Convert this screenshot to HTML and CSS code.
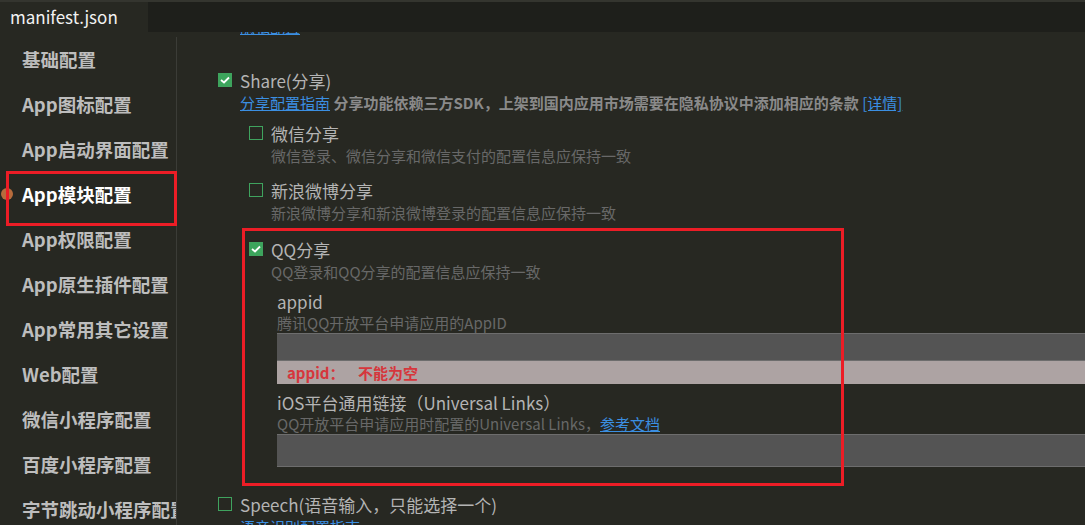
FILE: index.html
```html
<!DOCTYPE html>
<html lang="zh">
<head>
    <meta charset="UTF-8">
    <title>manifest.json</title>
    <link rel="stylesheet" href="styles.css">
</head>
<body>
    <div class="tab-bar">
        <div class="tab">manifest.json</div>
    </div>

    <div class="main">
        <div class="sidebar">
            <div class="nav-item">基础配置</div>
            <div class="nav-item">App图标配置</div>
            <div class="nav-item">App启动界面配置</div>
            <div class="nav-item active">App模块配置</div>
            <div class="nav-item">App权限配置</div>
            <div class="nav-item">App原生插件配置</div>
            <div class="nav-item">App常用其它设置</div>
            <div class="nav-item">Web配置</div>
            <div class="nav-item">微信小程序配置</div>
            <div class="nav-item">百度小程序配置</div>
            <div class="nav-item">字节跳动小程序配置</div>
        </div>

        <div class="content">
            <div class="cut-link"><a href="#">隐私配置指南</a></div>

            <div class="opt opt-share">
                <span class="check on"><svg width="10" height="8" viewBox="0 0 10 8"><path d="M1 4 L4 6.5 L9 1.5" fill="none" stroke="#fff" stroke-width="1.8"/></svg></span>
                <span>Share(分享)</span>
            </div>
            <div class="note"><a href="#">分享配置指南</a> <b>分享功能依赖三方SDK，上架到国内应用市场需要在隐私协议中添加相应的条款</b> <a href="#">[详情]</a></div>

            <div class="sub">
                <div class="opt gap-a">
                    <span class="check"></span>
                    <span>微信分享</span>
                </div>
                <div class="desc">微信登录、微信分享和微信支付的配置信息应保持一致</div>

                <div class="opt gap-b">
                    <span class="check"></span>
                    <span>新浪微博分享</span>
                </div>
                <div class="desc">新浪微博分享和新浪微博登录的配置信息应保持一致</div>

                <div class="opt gap-c">
                    <span class="check on"><svg width="10" height="8" viewBox="0 0 10 8"><path d="M1 4 L4 6.5 L9 1.5" fill="none" stroke="#fff" stroke-width="1.8"/></svg></span>
                    <span>QQ分享</span>
                </div>
                <div class="desc">QQ登录和QQ分享的配置信息应保持一致</div>

                <div class="field">
                    <div class="field-label">appid</div>
                    <div class="field-desc">腾讯QQ开放平台申请应用的AppID</div>
                    <div class="input"></div>
                    <div class="error">appid：&nbsp;&nbsp;&nbsp;&nbsp;不能为空</div>

                    <div class="field-label gap-d">iOS平台通用链接（Universal Links）</div>
                    <div class="field-desc">QQ开放平台申请应用时配置的Universal Links，<a href="#">参考文档</a></div>
                    <div class="input tall"></div>
                </div>
            </div>

            <div class="opt gap-e">
                <span class="check"></span>
                <span>Speech(语音输入，只能选择一个)</span>
            </div>
            <div class="note"><a href="#">语音识别配置指南</a></div>
        </div>
    </div>

    <!-- annotation boxes drawn over the screenshot -->
    <div class="mark mark-nav"></div>
    <div class="mark mark-qq"></div>
</body>
</html>
```

FILE: styles.css
```css
body {
    margin: 0;
    width: 1085px;
    height: 525px;
    overflow: hidden;
    background-color: #272822;
    font-family: "Noto Sans CJK SC", "Noto Sans", sans-serif;
    color: #b4b4b4;
    position: relative;
}
a {
    color: #3b8fe2;
    text-decoration: underline;
}
.tab-bar {
    height: 30px;
    border-top: 2px solid #34352f;
    background-color: #1e1f1b;
    display: flex;
}
.tab {
    width: 138px;
    padding-left: 10px;
    background-color: #272822;
    color: #f2f2f2;
    font-size: 17px;
    line-height: 30px;
}
.main {
    display: flex;
    height: 493px;
}
.sidebar {
    width: 176px;
    flex-shrink: 0;
    margin-top: 5px;
    border-right: 1px solid #3b3c37;
    overflow: hidden;
    white-space: nowrap;
}
.nav-item {
    height: 45px;
    line-height: 45px;
    padding-left: 22px;
    font-size: 18.5px;
    font-weight: bold;
    color: #bdbdbd;
    position: relative;
}
.nav-item.active {
    color: #ffffff;
}
.nav-item.active::before {
    content: "";
    position: absolute;
    left: 1px;
    top: 16px;
    width: 12px;
    height: 12px;
    border-radius: 50%;
    background-color: #b86c3c;
}
.content {
    flex: 1;
    padding-left: 41px;
    overflow: hidden;
    white-space: nowrap;
}
.cut-link {
    height: 8px;
    overflow: hidden;
    padding-left: 22px;
}
.cut-link a {
    display: block;
    width: 60px;
    margin-top: -16px;
    line-height: 22px;
    font-size: 15px;
    overflow: hidden;
}
.opt {
    display: flex;
    align-items: center;
    gap: 8px;
    height: 24px;
    font-size: 17px;
    color: #b4b4b4;
}
.opt-share {
    margin-top: 28px;
}
.check {
    box-sizing: border-box;
    width: 14px;
    height: 14px;
    border: 1px solid #3fa35e;
    display: flex;
    align-items: center;
    justify-content: center;
    flex-shrink: 0;
}
.check.on {
    background-color: #3ca55c;
}
.note {
    padding-left: 22px;
    height: 22px;
    line-height: 22px;
    font-size: 15px;
}
.note b {
    color: #8a8a8a;
}
.sub {
    padding-left: 31px;
}
.desc {
    padding-left: 22px;
    height: 22px;
    line-height: 22px;
    font-size: 15px;
    color: #686868;
}
.gap-a {
    margin-top: 7px;
}
.gap-b {
    margin-top: 11px;
}
.gap-c {
    margin-top: 13px;
}
.gap-d {
    margin-top: 8px;
}
.gap-e {
    margin-top: 25px;
}
.field {
    padding-left: 28px;
    margin-top: 8px;
}
.field-label {
    height: 22px;
    line-height: 22px;
    font-size: 17px;
    color: #b4b4b4;
}
.field-desc {
    height: 20px;
    line-height: 20px;
    font-size: 15px;
    color: #686868;
}
.input {
    width: 900px;
    height: 26px;
    background-color: #545454;
    border-top: 1px solid #6d6d6d;
    border-bottom: 1px solid #6d6d6d;
}
.input.tall {
    height: 31px;
}
.error {
    width: 890px;
    height: 23px;
    line-height: 23px;
    padding-left: 10px;
    background-color: #ada3a3;
    color: #d6363c;
    font-size: 15px;
    font-weight: bold;
}
.mark {
    position: absolute;
    border: 3px solid #ec1d26;
    box-sizing: border-box;
}
.mark-nav {
    left: 6px;
    top: 171px;
    width: 171px;
    height: 55px;
}
.mark-qq {
    left: 242px;
    top: 228px;
    width: 602px;
    height: 258px;
}
```
